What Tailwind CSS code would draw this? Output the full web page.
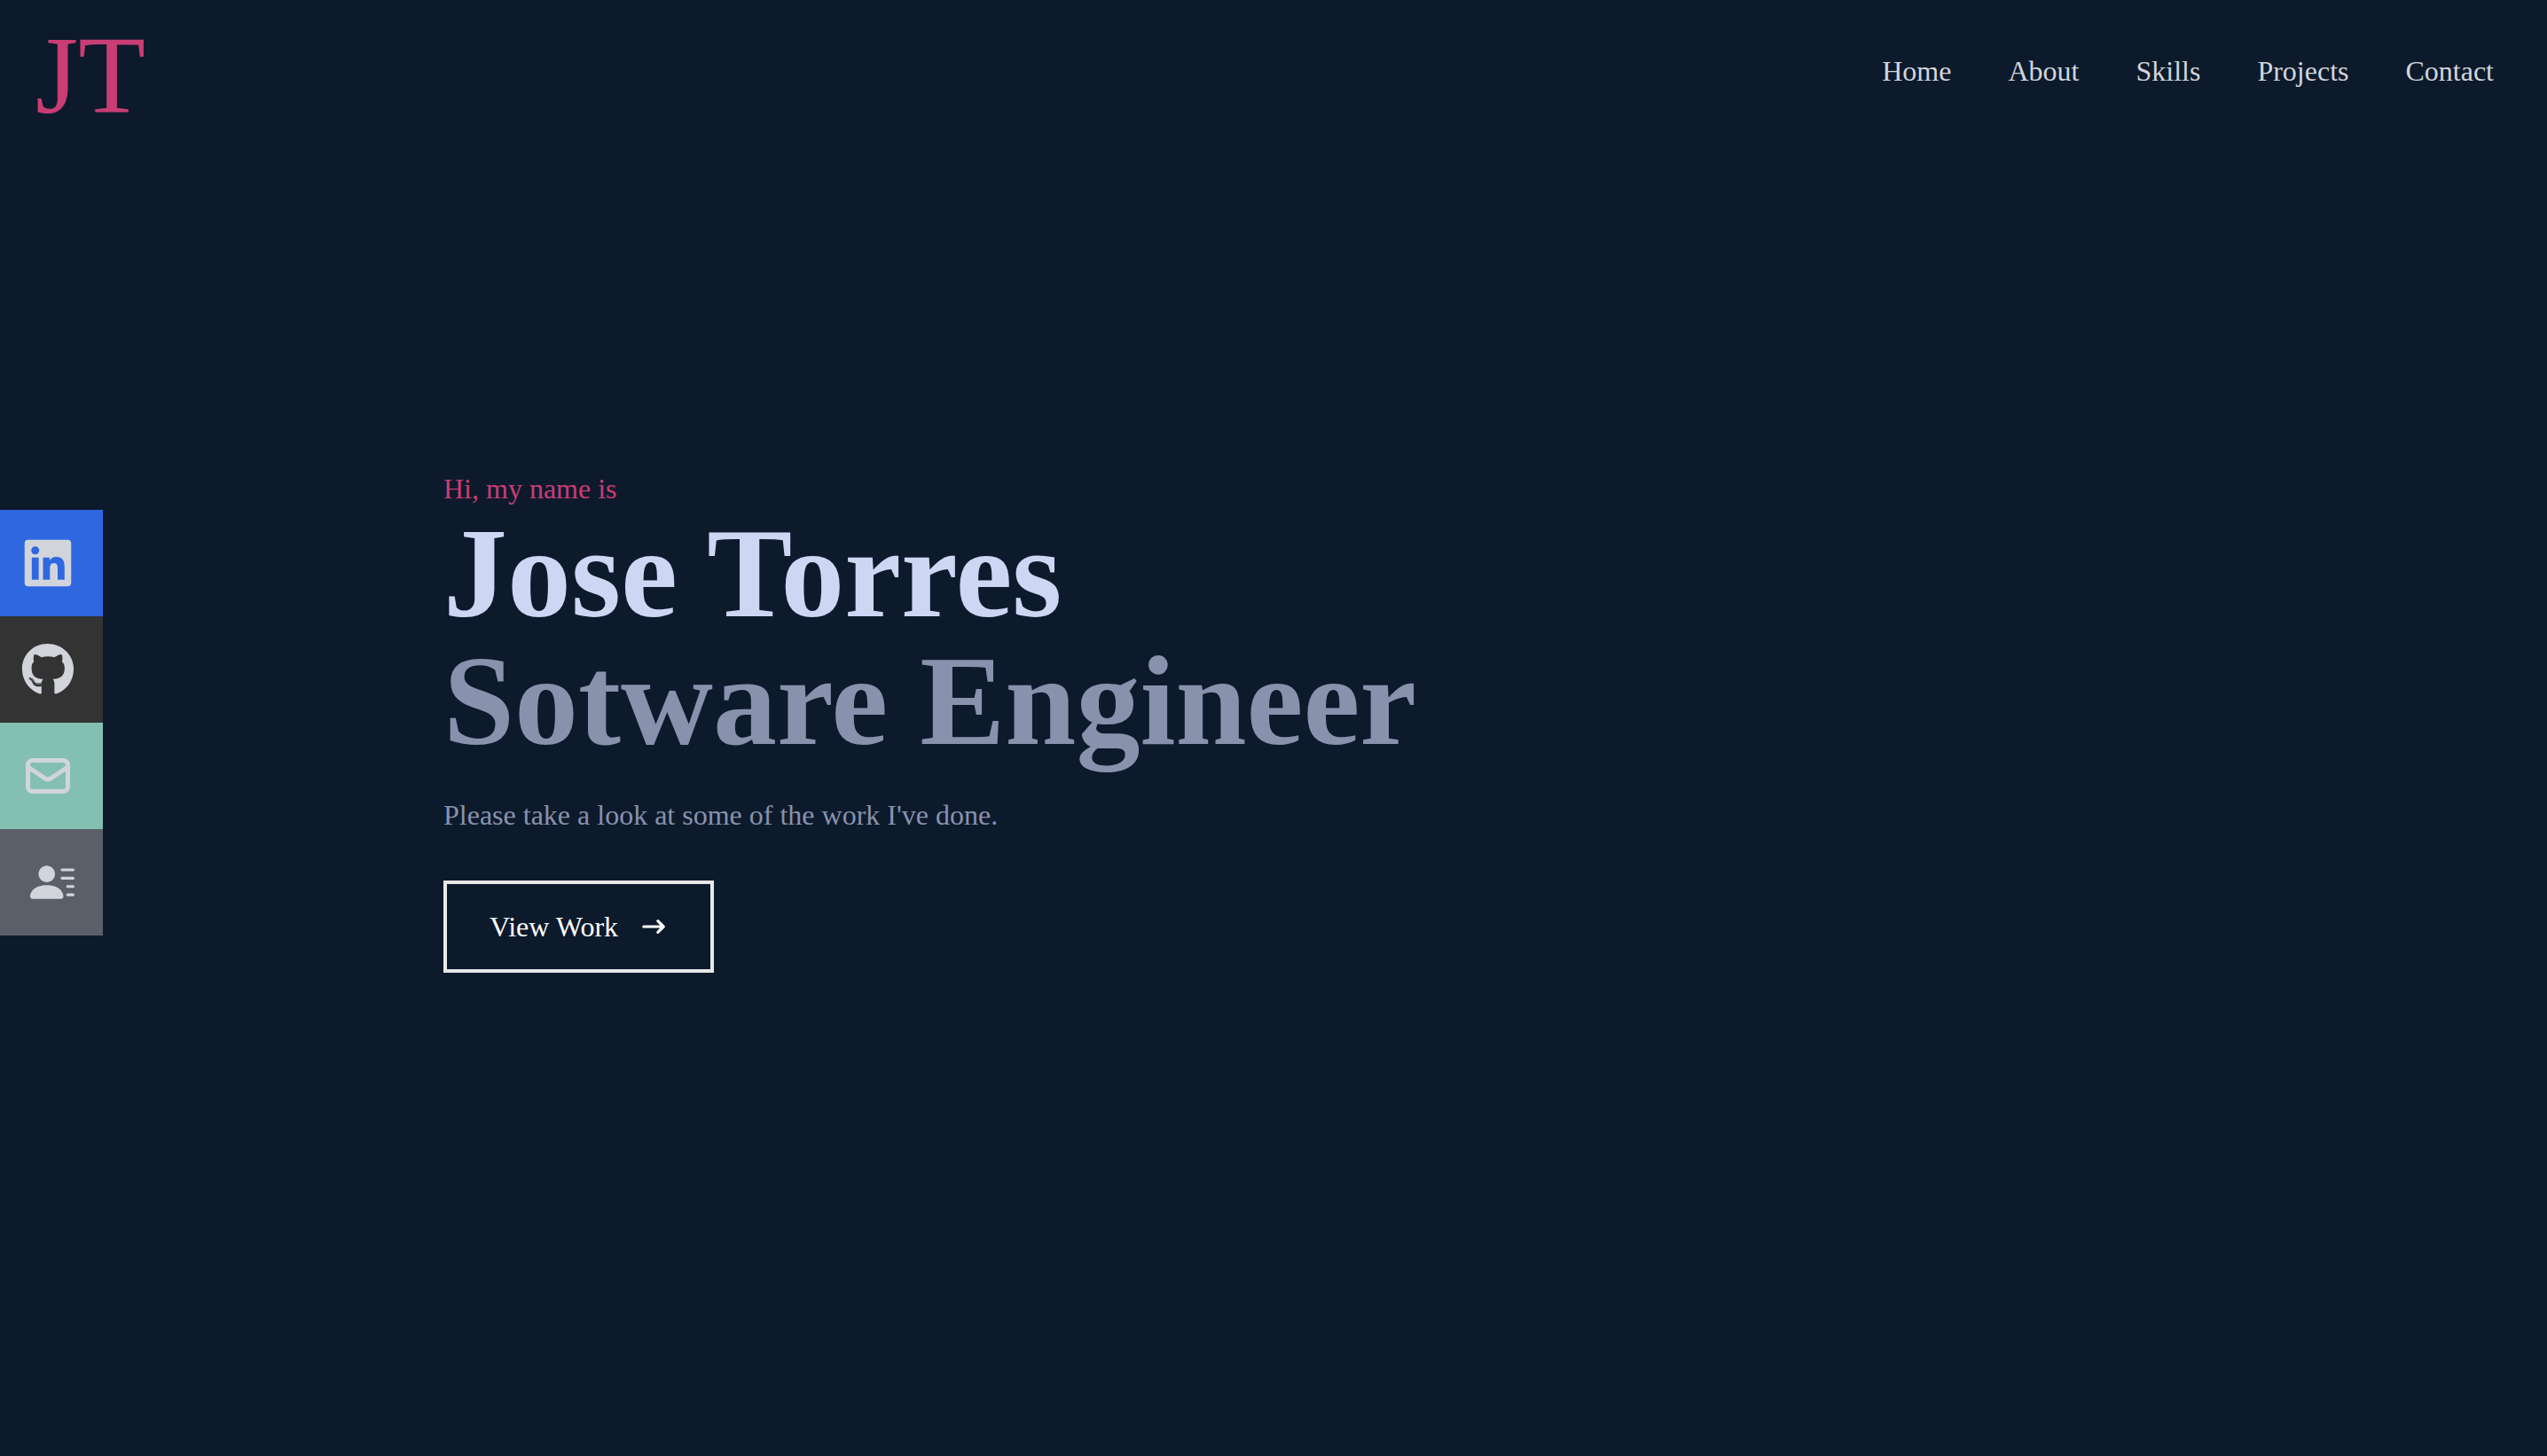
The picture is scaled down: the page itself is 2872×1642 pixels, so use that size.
<!DOCTYPE html>
<html lang="en">
<head>
<meta charset="utf-8">
<meta name="viewport" content="width=device-width, initial-scale=1">
<title>Jose Torres</title>
<script src="https://cdn.jsdelivr.net/npm/@tailwindcss/browser@4"></script>
</head>
<body class="bg-[#0d1a2c] font-['Liberation_Serif','Times_New_Roman',serif] text-[32px] leading-[48px]">
  <header class="fixed inset-x-0 top-0 z-10 flex h-40 items-center justify-between bg-[#0d1a2c] pr-7 pl-10 text-[#d1d5db]">
    <a href="#home" class="pt-3 text-[124px] leading-none text-[#c93d75]">JT</a>
    <nav aria-label="Main">
      <ul class="flex">
        <li class="px-8"><a href="#home">Home</a></li>
        <li class="px-8"><a href="#about">About</a></li>
        <li class="px-8"><a href="#skills">Skills</a></li>
        <li class="px-8"><a href="#projects">Projects</a></li>
        <li class="px-8"><a href="#contact">Contact</a></li>
      </ul>
    </nav>
  </header>

  <ul class="fixed top-[35%] left-0 z-10 w-[116px] text-[#d1d5db]">
    <li>
      <a href="#linkedin" aria-label="LinkedIn" class="flex h-[120px] items-center justify-end bg-[#2f67e0] pr-8">
        <svg class="size-[60px]" viewBox="0 0 448 512" fill="currentColor" aria-hidden="true"><path d="M416 32H31.9C14.3 32 0 46.5 0 64.3v383.4C0 465.5 14.3 480 31.9 480H416c17.6 0 32-14.5 32-32.3V64.3c0-17.8-14.4-32.3-32-32.3zM135.4 416H69V202.2h66.5V416zm-33.2-243c-21.3 0-38.5-17.3-38.5-38.5S80.9 96 102.2 96c21.2 0 38.5 17.3 38.5 38.5 0 21.3-17.2 38.5-38.5 38.5zm282.1 243h-66.4V312c0-24.8-.5-56.7-34.5-56.7-34.6 0-39.9 27-39.9 54.9V416h-66.4V202.2h63.7v29.2h.9c8.9-16.8 30.6-34.5 62.9-34.5 67.2 0 79.7 44.3 79.7 101.9V416z"/></svg>
      </a>
    </li>
    <li>
      <a href="#github" aria-label="GitHub" class="flex h-[120px] items-center justify-end bg-[#333333] pr-8">
        <svg class="size-[60px]" viewBox="0 0 496 512" fill="currentColor" aria-hidden="true"><path d="M165.9 397.4c0 2-2.3 3.6-5.2 3.6-3.3.3-5.6-1.3-5.6-3.6 0-2 2.3-3.6 5.2-3.6 3-.3 5.6 1.3 5.6 3.6zm-31.1-4.5c-.7 2 1.3 4.3 4.3 4.9 2.6 1 5.6 0 6.2-2s-1.3-4.3-4.3-5.2c-2.6-.7-5.5.3-6.2 2.3zm44.2-1.7c-2.9.7-4.9 2.6-4.6 4.9.3 2 2.9 3.3 5.9 2.6 2.9-.7 4.9-2.6 4.6-4.6-.3-1.9-3-3.2-5.9-2.9zM244.8 8C106.1 8 0 113.3 0 252c0 110.9 69.8 205.8 169.5 239.2 12.8 2.3 17.3-5.6 17.3-12.1 0-6.2-.3-40.4-.3-61.4 0 0-70 15-84.7-29.8 0 0-11.4-29.1-27.8-36.6 0 0-22.9-15.7 1.6-15.4 0 0 24.9 2 38.6 25.8 21.9 38.6 58.6 27.5 72.9 20.9 2.3-16 8.8-27.1 16-33.7-55.9-6.2-112.3-14.3-112.3-110.5 0-27.5 7.6-41.3 23.6-58.9-2.6-6.5-11.1-33.3 2.6-67.9 20.9-6.5 69 27 69 27 20-5.6 41.5-8.5 62.8-8.5s42.8 2.9 62.8 8.5c0 0 48.1-33.6 69-27 13.7 34.7 5.2 61.4 2.6 67.9 16 17.7 25.8 31.5 25.8 58.9 0 96.5-58.9 104.2-114.8 110.5 9.2 7.9 17 22.9 17 46.4 0 33.7-.3 75.4-.3 83.6 0 6.5 4.6 14.4 17.3 12.1C428.2 457.8 496 362.9 496 252 496 113.3 383.5 8 244.8 8zM97.2 352.9c-1.3 1-1 3.3.7 5.2 1.6 1.6 3.9 2.3 5.2 1 1.3-1 1-3.3-.7-5.2-1.6-1.6-3.9-2.3-5.2-1zm-10.8-8.1c-.7 1.3.3 2.9 2.3 3.9 1.6 1 3.6.7 4.3-.7.7-1.3-.3-2.9-2.3-3.9-2-.6-3.6-.3-4.3.7zm32.4 35.6c-1.6 1.3-1 4.3 1.3 6.2 2.3 2.3 5.2 2.6 6.5 1 1.3-1.3.7-4.3-1.3-6.2-2.2-2.3-5.2-2.6-6.5-1zm-11.4-14.7c-1.6 1-1.6 3.6 0 5.9 1.6 2.3 4.3 3.3 5.6 2.3 1.6-1.3 1.6-3.9 0-6.2-1.4-2.3-4-3.3-5.6-2z"/></svg>
      </a>
    </li>
    <li>
      <a href="#email" aria-label="Email" class="flex h-[120px] items-center justify-end bg-[#83c0b1] pr-8">
        <svg class="size-[60px]" viewBox="0 0 24 24" fill="none" stroke="currentColor" stroke-width="2" stroke-linecap="round" stroke-linejoin="round" aria-hidden="true"><path d="M3 8l7.89 5.26a2 2 0 002.22 0L21 8M5 19h14a2 2 0 002-2V7a2 2 0 00-2-2H5a2 2 0 00-2 2v10a2 2 0 002 2z"/></svg>
      </a>
    </li>
    <li>
      <a href="#resume" aria-label="Resume" class="flex h-[120px] items-center justify-end bg-[#5a606a] pr-8">
        <svg class="size-[50px]" viewBox="0 0 16 16" fill="currentColor" aria-hidden="true"><path d="M6 8a3 3 0 1 0 0-6 3 3 0 0 0 0 6zm-5 6s-1 0-1-1 1-4 6-4 6 3 6 4-1 1-1 1H1zM11 3.5a.5.5 0 0 1 .5-.5h4a.5.5 0 0 1 0 1h-4a.5.5 0 0 1-.5-.5zm.5 2.5a.5.5 0 0 0 0 1h4a.5.5 0 0 0 0-1h-4zm2 3a.5.5 0 0 0 0 1h2a.5.5 0 0 0 0-1h-2zm0 3a.5.5 0 0 0 0 1h2a.5.5 0 0 0 0-1h-2z"/></svg>
      </a>
    </li>
  </ul>

  <main id="home" class="mx-auto flex min-h-screen max-w-[2000px] flex-col items-start justify-center px-16">
    <p class="text-[#c93d75]">Hi, my name is</p>
    <h1 class="text-[144px] leading-none font-bold text-[#cdd6f3]">Jose Torres</h1>
    <h2 class="text-[144px] leading-none font-bold text-[#8892ad]">Sotware Engineer</h2>
    <p class="py-8 text-[#8892ad]">Please take a look at some of the work I've done.</p>
    <button type="button" class="my-[18px] flex items-center gap-6 border-4 border-[#e8e8e8] px-12 py-6 text-white">
      View Work
      <svg class="size-8" viewBox="0 0 20 20" fill="currentColor" aria-hidden="true"><path fill-rule="evenodd" d="M12.293 5.293a1 1 0 011.414 0l4 4a1 1 0 010 1.414l-4 4a1 1 0 01-1.414-1.414L14.586 11H3a1 1 0 110-2h11.586l-2.293-2.293a1 1 0 010-1.414z" clip-rule="evenodd"/></svg>
    </button>
  </main>
</body>
</html>
